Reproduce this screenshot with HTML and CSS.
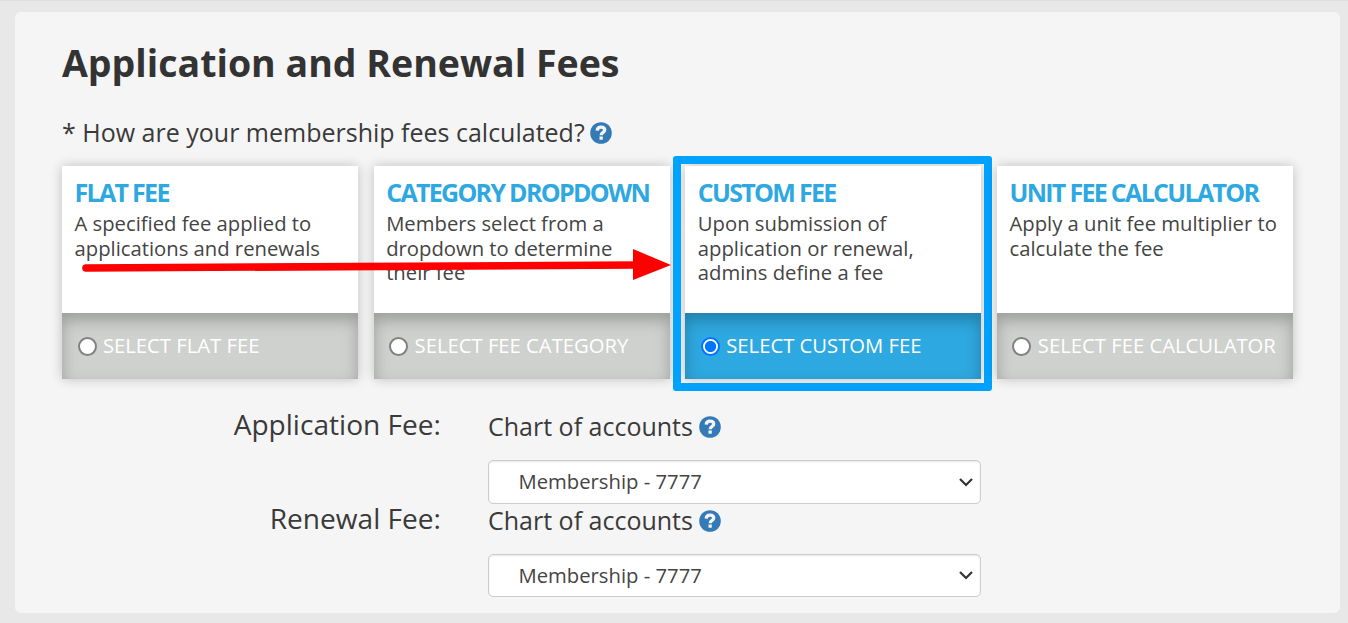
FILE: index.html
```
<!DOCTYPE html>
<html lang="en">
<head>
    <meta charset="UTF-8">
    <meta name="viewport" content="width=device-width, initial-scale=1.0">
    <title>Application and Renewal Fees</title>
    <link rel="stylesheet" href="styles.css">
</head>
<body>
    <svg class="sprite" width="0" height="0">
        <symbol id="help" viewBox="0 0 22 22">
            <circle cx="11" cy="11" r="10.8" fill="#337ab7"/>
            <path d="M7.2 8.6C7.4 6 8.9 5.1 11 5.1C13.4 5.1 14.7 6.3 14.7 8.1C14.7 10.5 11.2 10.4 11.2 13.2" fill="none" stroke="#f5f5f5" stroke-width="3.3"/>
            <rect x="9.5" y="14.5" width="3.3" height="3.2" fill="#f5f5f5"/>
        </symbol>
    </svg>
    <div class="panel">
        <h1>Application and Renewal Fees</h1>
        <p class="question"><span>* How are your membership fees calculated?</span><svg class="help"><use href="#help"/></svg></p>

        <div class="cards">
            <div class="card">
                <div class="card-body">
                    <h2>FLAT FEE</h2>
                    <p>A specified fee applied to applications and renewals</p>
                </div>
                <label class="card-select"><input type="radio" name="fee"><span>SELECT FLAT FEE</span></label>
            </div>
            <div class="card">
                <div class="card-body">
                    <h2>CATEGORY DROPDOWN</h2>
                    <p>Members select from a dropdown to determine their fee</p>
                </div>
                <label class="card-select"><input type="radio" name="fee"><span>SELECT FEE CATEGORY</span></label>
            </div>
            <div class="card selected">
                <div class="card-body">
                    <h2>CUSTOM FEE</h2>
                    <p>Upon submission of application or renewal, admins define a fee</p>
                </div>
                <label class="card-select"><input type="radio" name="fee" checked><span>SELECT CUSTOM FEE</span></label>
                <div class="highlight"></div>
            </div>
            <div class="card">
                <div class="card-body">
                    <h2>UNIT FEE CALCULATOR</h2>
                    <p>Apply a unit fee multiplier to calculate the fee</p>
                </div>
                <label class="card-select"><input type="radio" name="fee"><span>SELECT FEE CALCULATOR</span></label>
            </div>
            <svg class="arrow" width="592" height="34" viewBox="0 0 592 34">
                <path d="M6 20L556 17" stroke="#f00" stroke-width="7.6" stroke-linecap="round"/>
                <path d="M553 1L591 17L553 32Z" fill="#f00"/>
            </svg>
        </div>

        <div class="fee-row">
            <div class="fee-label">Application Fee:</div>
            <div class="fee-field">
                <div class="accounts"><span>Chart of accounts</span><svg class="help"><use href="#help"/></svg></div>
                <div class="select"><span>Membership - 7777</span><svg width="14" height="9" viewBox="0 0 14 9"><path d="M1 1L7 7L13 1" fill="none" stroke="#333" stroke-width="2.2"/></svg></div>
            </div>
        </div>
        <div class="fee-row">
            <div class="fee-label">Renewal Fee:</div>
            <div class="fee-field">
                <div class="accounts"><span>Chart of accounts</span><svg class="help"><use href="#help"/></svg></div>
                <div class="select"><span>Membership - 7777</span><svg width="14" height="9" viewBox="0 0 14 9"><path d="M1 1L7 7L13 1" fill="none" stroke="#333" stroke-width="2.2"/></svg></div>
            </div>
        </div>
    </div>
</body>
</html>
```
FILE: styles.css
```
* { box-sizing: border-box; }
body {
    font-family: 'Open Sans', sans-serif;
    margin: 0;
    height: 623px;
    padding: 11px 8px 10px 15px;
    background: #e8e8e8;
    border-top: 1px solid #dfdfdf;
    color: #3a3a3a;
    overflow: hidden;
}
.sprite { position: absolute; }
.panel {
    height: 601px;
    padding: 24px 47px 0;
    background: #f5f5f5;
    border-radius: 6px;
}
h1 { margin: 0; font-size: 37.5px; line-height: 54px; font-weight: 700; color: #333; white-space: nowrap; }
.question { display: flex; align-items: center; height: 34px; margin: 26px 0 16px; font-size: 25px; white-space: nowrap; }
.question span { margin-top: -2px; }
.help { width: 22px; height: 22px; margin-left: 6px; flex: none; }
.question .help { margin-left: 5.4px; }
.cards { position: relative; display: grid; grid-template-columns: repeat(4, 296px); justify-content: space-between; }
.card { position: relative; height: 213px; background: #fff; box-shadow: 0 0 11px rgba(0,0,0,0.22); }
.card-body { height: 147px; padding: 10px 12.5px 0; }
.card h2 { margin: 0; font-size: 25px; line-height: 32px; font-weight: 700; letter-spacing: -1.7px; color: #2ea8e0; white-space: nowrap; }
.card p { margin: 3.4px 0 0; font-size: 20.25px; line-height: 24.4px; color: #444; }
.card-select {
    display: flex;
    align-items: center;
    height: 66px;
    padding-left: 15.5px;
    background: #cfd1ce;
    box-shadow: inset 0 7px 15px rgba(0,0,0,0.25);
    color: #fff;
    font-size: 20.25px;
    white-space: nowrap;
}
.card-select span { margin-top: -2px; }
.card-select input {
    appearance: none;
    flex: none;
    width: 19px;
    height: 19px;
    margin: 0 6.4px 0 0;
    border: 2px solid #808080;
    border-radius: 50%;
    background: #fff;
}
.selected .card-select { background: #2ea8e0; }
.selected input { border: 2px solid #0075ff; background: radial-gradient(circle, #0075ff 5.2px, #fff 6px); }
.highlight { position: absolute; inset: -10px -11px -12px -12px; border: 8px solid #00a2ff; border-radius: 3px; }
.arrow { position: absolute; left: 18px; top: 82px; }
.fee-row { display: grid; grid-template-columns: 379px 493px; column-gap: 47px; height: 94px; }
.cards + .fee-row { margin-top: 31px; }
.fee-label { text-align: right; font-size: 28.1px; line-height: 28px; }
.accounts { display: flex; align-items: center; height: 34px; font-size: 25px; }
.accounts span { margin-top: -2px; }
.select {
    display: flex;
    align-items: center;
    justify-content: space-between;
    height: 44px;
    margin-top: 16px;
    padding: 0 7px 0 29.5px;
    border: 1px solid #ccc;
    border-radius: 5px;
    background: #fff;
    box-shadow: inset 0 1px 2px rgba(0,0,0,0.1);
    font-size: 20.25px;
    color: #444;
}
.select span { margin-top: -2px; }
.fee-row:last-child .select { height: 43px; }
```
